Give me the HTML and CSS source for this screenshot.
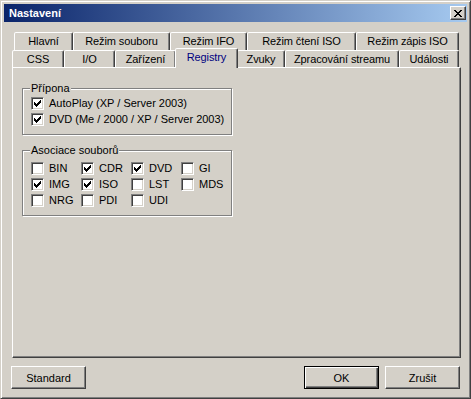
FILE: index.html
```html
<!DOCTYPE html>
<html lang="cs">
<head>
    <meta charset="UTF-8">
    <title>Nastavení</title>
    <link rel="stylesheet" href="styles.css">
</head>
<body>
    <svg class="defs" width="0" height="0">
        <symbol id="check" viewBox="0 0 9 9">
            <path d="M1 3h1v3H1zM2 4h1v3H2zM3 5h1v3H3zM4 4h1v3H4zM5 3h1v3H5zM6 2h1v3H6zM7 1h1v3H7z"/>
        </symbol>
    </svg>

    <div class="window">
        <div class="titlebar">
            <span class="title">Nastavení</span>
            <button class="close" title="Zavřít">
                <svg width="8" height="7" viewBox="0 0 8 7" shape-rendering="crispEdges">
                    <path d="M0 0h2v1H0zM6 0h2v1H6zM1 1h2v1H1zM5 1h2v1H5zM2 2h4v1H2zM3 3h2v1H3zM2 4h4v1H2zM1 5h2v1H1zM5 5h2v1H5zM0 6h2v1H0zM6 6h2v1H6z"/>
                </svg>
            </button>
        </div>

        <div class="tabs">
            <div class="tab-row back">
                <div class="tab w59">Hlavní</div>
                <div class="tab w97">Režim souboru</div>
                <div class="tab w77">Režim IFO</div>
                <div class="tab w109">Režim čtení ISO</div>
                <div class="tab w103">Režim zápis ISO</div>
            </div>
            <div class="tab-row front">
                <div class="tab w52">CSS</div>
                <div class="tab w51">I/O</div>
                <div class="tab w61">Zařízení</div>
                <div class="tab w61 active">Registry</div>
                <div class="tab w48">Zvuky</div>
                <div class="tab w114">Zpracování streamu</div>
                <div class="tab w60">Události</div>
            </div>
        </div>

        <div class="panel">
            <div class="group">
                <span class="group-title">Přípona</span>
                <label class="check-row"><span class="box"><svg><use href="#check"/></svg></span>AutoPlay (XP / Server 2003)</label>
                <label class="check-row"><span class="box"><svg><use href="#check"/></svg></span>DVD (Me / 2000 / XP / Server 2003)</label>
            </div>

            <div class="group assoc">
                <span class="group-title">Asociace souborů</span>
                <div class="check-grid">
                    <label class="check-row"><span class="box"></span>BIN</label>
                    <label class="check-row"><span class="box"><svg><use href="#check"/></svg></span>CDR</label>
                    <label class="check-row"><span class="box"><svg><use href="#check"/></svg></span>DVD</label>
                    <label class="check-row"><span class="box"></span>GI</label>
                    <label class="check-row"><span class="box"><svg><use href="#check"/></svg></span>IMG</label>
                    <label class="check-row"><span class="box"><svg><use href="#check"/></svg></span>ISO</label>
                    <label class="check-row"><span class="box"></span>LST</label>
                    <label class="check-row"><span class="box"></span>MDS</label>
                    <label class="check-row"><span class="box"></span>NRG</label>
                    <label class="check-row"><span class="box"></span>PDI</label>
                    <label class="check-row"><span class="box"></span>UDI</label>
                </div>
            </div>
        </div>

        <div class="buttons">
            <button class="btn">Standard</button>
            <span class="spacer"></span>
            <button class="btn default">OK</button>
            <button class="btn">Zrušit</button>
        </div>
    </div>
</body>
</html>
```

FILE: styles.css
```css
* {
    box-sizing: border-box;
}
body {
    margin: 0;
    background: #d4d0c8;
    font-family: "Liberation Sans", Arial, sans-serif;
    font-size: 11px;
    color: #000;
}
.defs {
    position: absolute;
}
.window {
    width: 471px;
    height: 399px;
    border: 1px solid;
    border-color: #d4d0c8 #404040 #404040 #d4d0c8;
    box-shadow: inset 1px 1px #fff, inset -1px -1px #808080;
    padding: 3px;
    display: flex;
    flex-direction: column;
}
.titlebar {
    height: 18px;
    display: flex;
    align-items: center;
    justify-content: space-between;
    padding: 0 1px 0 5px;
    background: linear-gradient(to right, #0a246a, #a6caf0);
}
.title {
    color: #fff;
    font-weight: bold;
}
.close {
    width: 16px;
    height: 14px;
    padding: 0;
    background: #d4d0c8;
    border: 1px solid;
    border-color: #fff #404040 #404040 #fff;
    box-shadow: inset -1px -1px #808080;
    display: flex;
    align-items: center;
    justify-content: center;
}
.close svg {
    display: block;
}

/* tabs */
.tabs {
    margin-top: 10px;
}
.tab-row {
    display: flex;
    height: 18px;
}
.tab-row.back {
    margin-left: 10px;
}
.tab-row.front {
    margin-left: 8px;
    height: 17px;
}
.tab {
    flex: none;
    text-align: center;
    background: #d4d0c8;
    border: 1px solid;
    border-bottom: 0;
    border-color: #fff #404040 transparent #fff;
    box-shadow: inset -1px 0 #808080;
    border-radius: 2px 2px 0 0;
    line-height: 16px;
    white-space: nowrap;
    letter-spacing: -0.1px;
}
.w48 { width: 48px; }
.w51 { width: 51px; }
.w52 { width: 52px; }
.w59 { width: 59px; }
.w60 { width: 60px; }
.w61 { width: 61px; }
.w77 { width: 77px; }
.w97 { width: 97px; }
.w103 { width: 103px; }
.w109 { width: 109px; }
.w114 { width: 114px; }
.front .tab {
    line-height: 17px;
}
.tab.active {
    position: relative;
    z-index: 1;
    width: 63px;
    height: 20px;
    margin: -2px -1px 0;
    color: #000080;
    line-height: 17px;
}

/* page */
.panel {
    margin-left: 8px;
    width: 449px;
    height: 291px;
    border: 1px solid;
    border-color: #fff #404040 #404040 #fff;
    box-shadow: inset -1px -1px #808080;
    padding: 20px 0 0 9px;
}
.group {
    position: relative;
    width: 210px;
    border: 1px solid #808080;
    box-shadow: inset 1px 1px #fff, 1px 1px #fff;
    padding: 8px 2px 5px 8px;
}
.group.assoc {
    margin-top: 15px;
    padding-top: 11px;
}
.group-title {
    position: absolute;
    top: -7px;
    left: 7px;
    padding: 0 1px;
    background: #d4d0c8;
    line-height: 13px;
}
.check-row {
    display: flex;
    gap: 5px;
    height: 16px;
    line-height: 13px;
    white-space: nowrap;
    overflow: hidden;
}
.check-grid {
    display: grid;
    grid-template-columns: repeat(4, 50px);
    grid-auto-rows: 16px;
}
.box {
    flex: none;
    width: 13px;
    height: 13px;
    border: 1px solid;
    border-color: #808080 #fff #fff #808080;
    box-shadow: inset 1px 1px #404040, inset -1px -1px #d4d0c8;
    background: #fff;
    padding: 1px;
}
.box svg {
    display: block;
    width: 9px;
    height: 9px;
    shape-rendering: crispEdges;
}

/* buttons */
.buttons {
    display: flex;
    gap: 6px;
    margin-top: 8px;
    padding: 0 7px;
}
.spacer {
    flex: 1;
}
.btn {
    width: 75px;
    height: 23px;
    padding: 0;
    font: inherit;
    color: #000;
    background: #d4d0c8;
    border: 1px solid;
    border-color: #fff #404040 #404040 #fff;
    box-shadow: inset -1px -1px #808080;
}
.btn.default {
    border-color: #000;
    box-shadow: inset 1px 1px #fff, inset -1px -1px #404040, inset -2px -2px #808080;
}
```
